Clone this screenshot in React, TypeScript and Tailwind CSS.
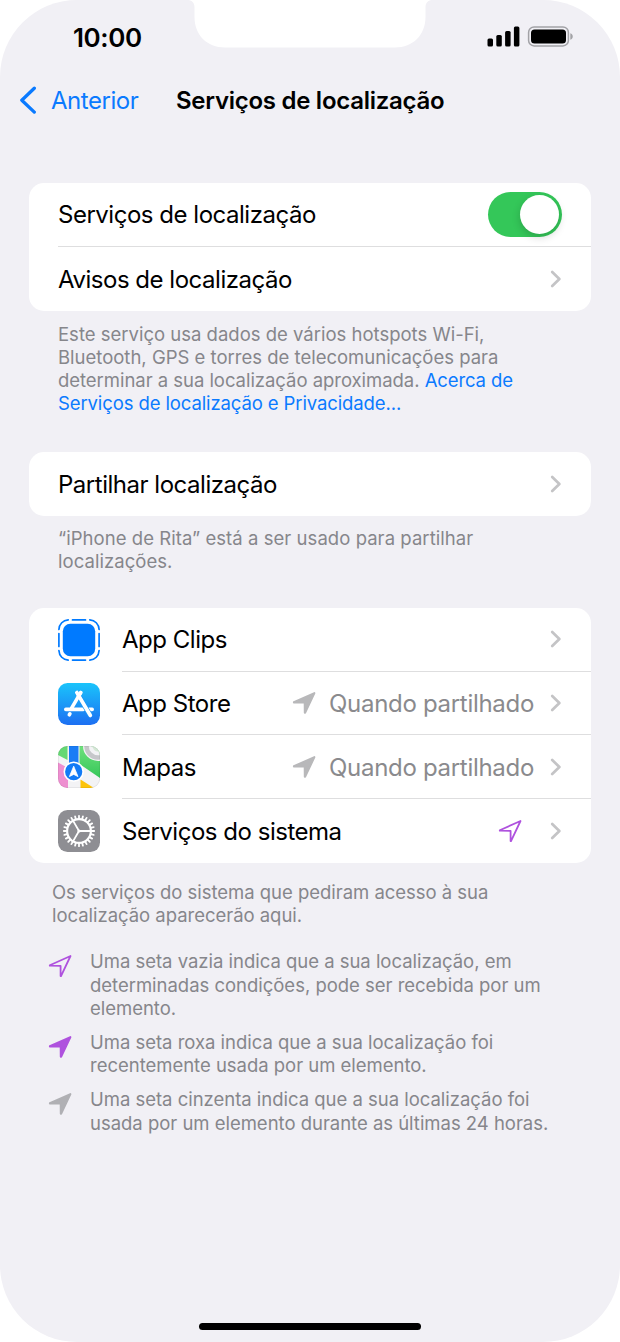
import type { ReactNode } from "react"

type ArrowProps = { color: string; outline?: boolean }

function LocationArrow({ color, outline }: ArrowProps) {
    return (
        <svg className="h-6 w-6 shrink-0" viewBox="0 0 24 24" fill="none">
            <path
                d={
                    outline
                        ? "M1.8 11.2 22.5 2 13 22.1 12.6 22.1 12.6 11.9 1.8 11.7Z"
                        : "M1.9 11.2 22.4 2.1 13.2 21.700 12.800 21.700 12.700 11.600 1.9 11.500Z"
                }
                fill={outline ? "none" : color}
                stroke={color}
                strokeWidth={outline ? 1.8 : 2}
                strokeLinejoin="round"
            />
        </svg>
    )
}

function Chevron() {
    return (
        <svg className="h-[18px] w-3 shrink-0" viewBox="0 0 12 18" fill="none">
            <path d="M2.2 2 9.4 9 2.2 16" stroke="#c4c4c6" strokeWidth="2.7" strokeLinecap="round" strokeLinejoin="round" />
        </svg>
    )
}

function AppClipsIcon() {
    return (
        <svg className="h-[42px] w-[42px]" viewBox="0 0 42 42" fill="none">
            <rect x="4.8" y="4.8" width="32.4" height="32.4" rx="7.5" fill="#007aff" />
            <g stroke="#007aff" strokeWidth="1.7" strokeLinecap="round">
                <path d="M14.5 .9h13M14.5 41.1h13M.9 14.5v13M41.1 14.5v13" />
                <path d="M.9 10.5C1.2 5 5 1.2 10.2.9M31.8.9C37 1.2 40.8 5 41.1 10.5M41.1 31.5C40.8 37 37 40.8 31.8 41.1M10.2 41.1C5 40.8 1.2 37 .9 31.5" />
            </g>
        </svg>
    )
}

function AppStoreIcon() {
    return (
        <svg className="h-[42px] w-[42px]" viewBox="0 0 42 42" fill="none">
            <defs>
                <linearGradient id="store" x1="0" y1="0" x2="0" y2="1">
                    <stop stopColor="#1ac4fb" />
                    <stop offset="1" stopColor="#1d6ff2" />
                </linearGradient>
            </defs>
            <rect width="42" height="42" rx="9.5" fill="url(#store)" />
            <g stroke="#fff" strokeWidth="3.6" strokeLinecap="round">
                <path d="M22.7 9.6 13.6 25.2" />
                <path d="M7.8 26.4h17.5M31.2 26.4h3" />
                <path d="M11.9 30.8 11.3 31.8" />
            </g>
            <path d="M18.9 9.6 32.3 32.4" stroke="#1e98f7" strokeWidth="5" />
            <path d="M18.9 9.6 32.3 32.4" stroke="#fff" strokeWidth="3.8" strokeLinecap="round" />
            <path d="M22.7 9.6 19.6 15" stroke="#fff" strokeWidth="3.6" strokeLinecap="round" />
        </svg>
    )
}

function MapsIcon() {
    return (
        <svg className="h-[42px] w-[42px]" viewBox="0 0 42 42" fill="none">
            <defs>
                <clipPath id="tile">
                    <rect width="42" height="42" rx="9.5" />
                </clipPath>
                <linearGradient id="park" x1="0" y1="0" x2="0" y2="1">
                    <stop stopColor="#6fe07c" />
                    <stop offset="1" stopColor="#35c759" />
                </linearGradient>
            </defs>
            <g clipPath="url(#tile)">
                <rect width="42" height="42" fill="#f3f3f5" />
                <path d="M0 0H9.5V14L0 9Z" fill="#65d873" />
                <path d="M0 16.5 10 22V42H0Z" fill="#ee8fd0" />
                <path d="M21.5 0H42V32L21.5 18Z" fill="url(#park)" />
                <path d="M22.5 33.5 36 42H22.5Z" fill="#fdc40b" />
                <circle cx="40" cy="0" r="15" fill="#f3f3f5" />
                <circle cx="40" cy="0" r="11.5" stroke="#c6c7ca" strokeWidth="4.5" />
                <circle cx="40" cy="0" r="5.5" fill="#d5e8d6" />
                <path d="M11 0h9.5v24H11Z" fill="#1a7cf5" />
                <circle cx="15.7" cy="25.7" r="10.2" fill="#fff" />
                <circle cx="15.7" cy="25.7" r="8.6" fill="#127bf6" />
                <path d="M15.7 20.2 20 30.6 15.7 28.4 11.4 30.6Z" fill="#fff" stroke="#fff" strokeWidth=".8" strokeLinejoin="round" />
            </g>
            <rect x=".3" y=".3" width="41.4" height="41.4" rx="9.2" stroke="#000" strokeOpacity=".12" strokeWidth=".6" />
        </svg>
    )
}

const teeth = Array.from({ length: 24 }, (_, i) => i * 15)

function GearIcon() {
    return (
        <svg className="h-[42px] w-[42px]" viewBox="0 0 42 42" fill="none">
            <rect width="42" height="42" rx="9.5" fill="#8e8e93" />
            <g stroke="#fff">
                <circle cx="21" cy="21" r="11.9" strokeWidth="2.2" />
                {teeth.map((a) => (
                    <path key={a} d="M21 5.8v3" strokeWidth="1.8" strokeLinecap="round" transform={`rotate(${a} 21 21)`} />
                ))}
                <path d="M21 21H33M21 21 15 10.6M21 21 15 31.4" strokeWidth="1.8" />
            </g>
            <circle cx="21" cy="21" r="1.6" fill="#fff" />
        </svg>
    )
}

function StatusBar() {
    return (
        <div className="flex h-[74px] items-start">
            <div className="w-[187px] pt-[22px] pl-[73px] text-[26px] leading-8 font-semibold tracking-[-0.4px]">10:00</div>
            {/* Notch */}
            <svg className="h-12 w-[246px]" viewBox="0 0 246 48">
                <path d="M0 0C5 0 7.5 2.5 7.5 7.5V17C7.5 35 20 47.5 38 47.5H208C226 47.5 238.5 35 238.5 17V7.5C238.5 2.5 241 0 246 0Z" fill="#fff" />
            </svg>
            <svg className="mt-[26px] ml-[54px] h-[21px] w-[87px]" viewBox="0 0 87 21" fill="none">
                <g fill="#000">
                    <rect x=".5" y="12.5" width="5.5" height="8" rx="1.5" />
                    <rect x="9.3" y="9" width="5.5" height="11.5" rx="1.5" />
                    <rect x="18.1" y="5" width="5.5" height="15.5" rx="1.5" />
                    <rect x="26.9" y=".5" width="5.5" height="20" rx="1.5" />
                </g>
                <rect x="41.6" y=".9" width="39.8" height="19" rx="5.5" stroke="#a2a2a6" strokeWidth="1.5" />
                <rect x="44" y="3.4" width="35" height="14" rx="3.5" fill="#000" />
                <path d="M83.3 7.2C86.6 8.3 86.6 12.7 83.3 13.8Z" fill="#a2a2a6" />
            </svg>
        </div>
    )
}

function Card({ children }: { children: ReactNode }) {
    return <section className="mx-[29px] overflow-hidden rounded-[15px] bg-white">{children}</section>
}

type RowProps = { label: string; icon?: ReactNode; border?: boolean; children?: ReactNode }

function Row({ label, icon, border, children }: RowProps) {
    return (
        <div className="flex h-[63.75px] pl-[29px]">
            {icon && <div className="flex w-16 items-center">{icon}</div>}
            <div className={border ? "flex flex-1 items-center border-b border-[#dededf] pr-[29px]" : "flex flex-1 items-center pr-[29px]"}>
                <span className="flex-1 pt-[2px] text-[24px] tracking-[-0.48px] whitespace-nowrap">{label}</span>
                {children}
            </div>
        </div>
    )
}

function Shared() {
    return (
        <div className="flex items-center text-[24px] tracking-[-0.3px] text-[#8a8a8d]">
            <LocationArrow color="#b8b8ba" />
            <span className="mr-[16px] ml-[13px] pt-[2px] whitespace-nowrap">Quando partilhado</span>
            <Chevron />
        </div>
    )
}

type LegendProps = { arrow: ReactNode; lines: string[] }

function Legend({ arrow, lines }: LegendProps) {
    return (
        <li className="flex gap-[18px]">
            <div className="pt-[4px]">{arrow}</div>
            <p>
                {lines.map((line) => (
                    <span key={line} className="block whitespace-nowrap">{line}</span>
                ))}
            </p>
        </li>
    )
}

export default function App() {
    return (
        <div className="bg-white">
            <main className="flex h-[1342px] w-[620px] flex-col overflow-hidden rounded-[77px] bg-[#f1f0f5] font-['Inter',sans-serif] text-black">
                <StatusBar />

                {/* Navigation */}
                <header className="flex h-[52px] items-center pl-[19px]">
                    <svg className="h-7 w-[18px]" viewBox="0 0 18 28" fill="none">
                        <path d="M15.3 2.2 2.8 14.2 15.3 26.1" stroke="#0a7aff" strokeWidth="3.3" strokeLinecap="round" strokeLinejoin="round" />
                    </svg>
                    <a className="ml-[14px] w-[125px] pt-[2px] text-[24px] tracking-[-0.45px] text-[#0a7aff]">Anterior</a>
                    <h1 className="pt-[2px] text-[24px] font-semibold tracking-[-0.27px] whitespace-nowrap">Serviços de localização</h1>
                </header>

                <div className="mt-[57px]">
                    <Card>
                        <Row label="Serviços de localização" border>
                            <div className="flex h-[45px] w-[74px] items-center justify-end rounded-full bg-[#34c759] pr-[3px]">
                                <div className="h-[39px] w-[39px] rounded-full bg-white shadow-[0_3px_8px_rgba(0,0,0,0.18)]" />
                            </div>
                        </Row>
                        <Row label="Avisos de localização">
                            <Chevron />
                        </Row>
                    </Card>
                    <p className="mt-[12px] ml-[58px] text-[18.5px] leading-[23.2px] whitespace-nowrap text-[#86868b]">
                        Este serviço usa dados de vários hotspots Wi-Fi,
                        <br />
                        Bluetooth, GPS e torres de telecomunicações para
                        <br />
                        <span className="tracking-[-0.04px]">determinar a sua localização aproximada. </span>
                        <a className="tracking-[-0.12px] text-[#0a7aff]">Acerca de</a>
                        <br />
                        <a className="tracking-[-0.11px] text-[#0a7aff]">Serviços de localização e Privacidade...</a>
                    </p>
                </div>

                <div className="mt-[37px]">
                    <Card>
                        <Row label="Partilhar localização">
                            <Chevron />
                        </Row>
                    </Card>
                    <p className="mt-[10.5px] ml-[58px] text-[18.5px] leading-[23.2px] tracking-[0.05px] whitespace-nowrap text-[#86868b]">
                        “iPhone de Rita” está a ser usado para partilhar
                        <br />
                        localizações.
                    </p>
                </div>

                <div className="mt-[35px]">
                    <Card>
                        <Row label="App Clips" icon={<AppClipsIcon />} border>
                            <Chevron />
                        </Row>
                        <Row label="App Store" icon={<AppStoreIcon />} border>
                            <Shared />
                        </Row>
                        <Row label="Mapas" icon={<MapsIcon />} border>
                            <Shared />
                        </Row>
                        <Row label="Serviços do sistema" icon={<GearIcon />}>
                            <div className="flex items-center gap-[28px]">
                                <LocationArrow color="#af52de" outline />
                                <Chevron />
                            </div>
                        </Row>
                    </Card>
                    <p className="mt-[18px] ml-[52px] text-[18.5px] leading-[23.2px] tracking-[-0.03px] whitespace-nowrap text-[#86868b]">
                        Os serviços do sistema que pediram acesso à sua
                        <br />
                        localização aparecerão aqui.
                    </p>
                    <ul className="mt-[23px] ml-12 flex flex-col gap-[11px] text-[18.5px] leading-[23.2px] tracking-[-0.02px] text-[#86868b]">
                        <Legend
                            arrow={<LocationArrow color="#af52de" outline />}
                            lines={["Uma seta vazia indica que a sua localização, em", "determinadas condições, pode ser recebida por um", "elemento."]}
                        />
                        <Legend
                            arrow={<LocationArrow color="#af52de" />}
                            lines={["Uma seta roxa indica que a sua localização foi", "recentemente usada por um elemento."]}
                        />
                        <Legend
                            arrow={<LocationArrow color="#b0b0b4" />}
                            lines={["Uma seta cinzenta indica que a sua localização foi", "usada por um elemento durante as últimas 24 horas."]}
                        />
                    </ul>
                </div>

                {/* Home indicator */}
                <div className="mx-auto mt-auto mb-3 h-[7px] w-[222px] rounded-full bg-black" />
            </main>
        </div>
    )
}
